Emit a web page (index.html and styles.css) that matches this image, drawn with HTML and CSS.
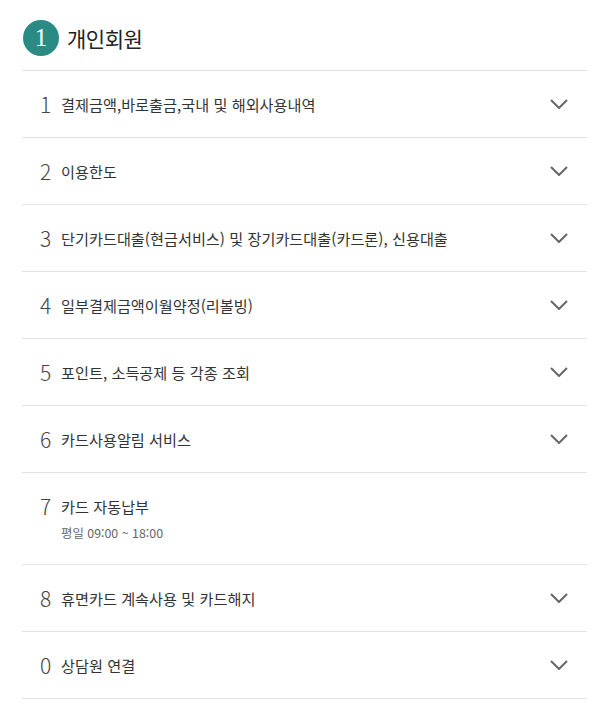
FILE: index.html
```html
<!DOCTYPE html>
<html lang="ko">
<head>
<meta charset="utf-8">
<link rel="stylesheet" href="styles.css">
</head>
<body>
<div class="wrap">
  <div class="head">
    <span class="badge">1</span>
    <h1 class="title">개인회원</h1>
  </div>
  <ul class="list">
    <li class="row"><span class="num">1</span><span class="txt">결제금액,바로출금,국내 및 해외사용내역</span><svg class="chev" viewBox="0 0 18 10"><path d="M1 1l8 8 8-8"/></svg></li>
    <li class="row"><span class="num">2</span><span class="txt">이용한도</span><svg class="chev" viewBox="0 0 18 10"><path d="M1 1l8 8 8-8"/></svg></li>
    <li class="row"><span class="num">3</span><span class="txt">단기카드대출(현금서비스) 및 장기카드대출(카드론), 신용대출</span><svg class="chev" viewBox="0 0 18 10"><path d="M1 1l8 8 8-8"/></svg></li>
    <li class="row"><span class="num">4</span><span class="txt">일부결제금액이월약정(리볼빙)</span><svg class="chev" viewBox="0 0 18 10"><path d="M1 1l8 8 8-8"/></svg></li>
    <li class="row"><span class="num">5</span><span class="txt">포인트, 소득공제 등 각종 조회</span><svg class="chev" viewBox="0 0 18 10"><path d="M1 1l8 8 8-8"/></svg></li>
    <li class="row"><span class="num">6</span><span class="txt">카드사용알림 서비스</span><svg class="chev" viewBox="0 0 18 10"><path d="M1 1l8 8 8-8"/></svg></li>
    <li class="row tall"><span class="num">7</span><div class="stack"><span class="txt">카드 자동납부</span><span class="sub">평일 09:00 ~ 18:00</span></div></li>
    <li class="row"><span class="num">8</span><span class="txt">휴면카드 계속사용 및 카드해지</span><svg class="chev" viewBox="0 0 18 10"><path d="M1 1l8 8 8-8"/></svg></li>
    <li class="row"><span class="num">0</span><span class="txt">상담원 연결</span><svg class="chev" viewBox="0 0 18 10"><path d="M1 1l8 8 8-8"/></svg></li>
  </ul>
</div>
</body>
</html>
```
FILE: styles.css
```css
html, body { margin: 0; padding: 0; background: #fff; }
body { font-family: "Noto Sans CJK KR", "Noto Sans", sans-serif; color: #333; }
.wrap { width: 565px; margin-left: 22px; }
.head { height: 71px; display: flex; align-items: center; border-bottom: 1px solid #e2e2e2; box-sizing: border-box; padding-top: 6px; }
.badge { width: 36px; height: 36px; border-radius: 50%; background: #2a8a84; color: #fff; display: flex; align-items: center; justify-content: center; font-family: "Liberation Serif", serif; font-size: 25px; margin-left: 1px; }
.title { margin: 0 0 0 8px; font-size: 21px; font-weight: 400; color: #222; letter-spacing: -0.5px; }
.list { list-style: none; margin: 0; padding: 0; }
.row { height: 67px; box-sizing: border-box; border-bottom: 1px solid #e2e2e2; display: flex; align-items: center; padding-left: 18px; padding-right: 19px; }
.num { width: 21px; font-size: 21px; font-weight: 300; color: #444; line-height: 1; }
.txt { flex: 1; font-size: 15.2px; color: #333; letter-spacing: 0; }
.chev { width: 18px; height: 10px; fill: none; stroke: #666; stroke-width: 2; }
.tall { height: 92px; align-items: flex-start; padding-top: 22px; }
.tall .num { margin-top: 1px; }
.stack { display: flex; flex-direction: column; }
.sub { font-size: 12.4px; color: #666; margin-top: 7px; }
```
